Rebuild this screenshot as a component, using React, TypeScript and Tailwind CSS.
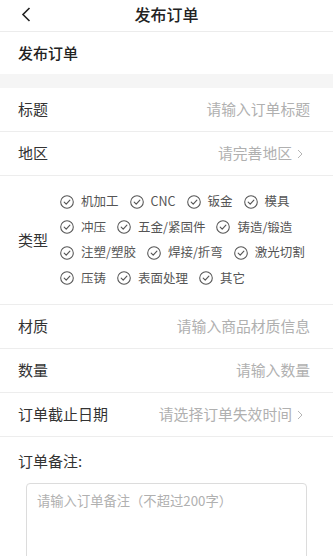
import React from 'react';

const types = [
  ['机加工', 'CNC', '钣金', '模具'],
  ['冲压', '五金/紧固件', '铸造/锻造'],
  ['注塑/塑胶', '焊接/折弯', '激光切割'],
  ['压铸', '表面处理', '其它'],
];

const CheckCircle: React.FC = () => (
  <svg width="14" height="14" viewBox="0 0 16 16" fill="none" className="shrink-0">
    <circle cx="8" cy="8" r="7.2" stroke="#555" strokeWidth="1.2" />
    <path d="M4.8 8.2 L7.1 10.4 L11.3 5.9" stroke="#555" strokeWidth="1.3" strokeLinecap="round" strokeLinejoin="round" />
  </svg>
);

const Chevron: React.FC = () => (
  <svg width="6" height="10" viewBox="0 0 6 10" fill="none" className="ml-[5px]">
    <path d="M1 1 L5 5 L1 9" stroke="#b5b5b5" strokeWidth="1" />
  </svg>
);

const Row: React.FC<{ label: string; placeholder: string; arrow?: boolean }> = ({ label, placeholder, arrow }) => (
  <div className={`flex h-[44px] items-center justify-between border-b border-[#ededed] pl-[18px] ${arrow ? 'pr-[30px]' : 'pr-[23px]'}`}>
    <span className="text-[15px] text-[#333]">{label}</span>
    <span className="flex items-center text-[14.8px] text-[#b0b0b0]">
      {placeholder}
      {arrow && <Chevron />}
    </span>
  </div>
);

export default function App() {
  return (
    <div className="min-h-[556px] w-[333px] bg-white" style={{ fontFamily: '"Noto Sans CJK SC", "Noto Sans", sans-serif' }}>
      {/* Header */}
      <div className="relative flex h-[32px] items-center justify-center border-b border-[#ececec]">
        <svg width="10" height="15" viewBox="0 0 10 15" fill="none" className="absolute left-[21px] top-[7px]">
          <path d="M8.5 1 L2 7.5 L8.5 14" stroke="#222" strokeWidth="1.6" />
        </svg>
        <span className="-mt-[3px] text-[16px] font-medium text-[#222]">发布订单</span>
      </div>

      <div className="flex h-[42px] items-center pl-[18px] text-[15px] font-medium text-[#222]">发布订单</div>
      <div className="h-[14px] bg-[#f5f5f5]" />

      <Row label="标题" placeholder="请输入订单标题" />
      <Row label="地区" placeholder="请完善地区" arrow />

      {/* Type */}
      <div className="flex items-center border-b border-[#ededed] py-[13px] pl-[18px]">
        <span className="w-[42px] text-[15px] text-[#333]">类型</span>
        <div className="flex flex-col">
          {types.map((row, i) => (
            <div key={i} className="flex h-[25.5px] items-center gap-[11px]">
              {row.map((t) => (
                <span key={t} className="flex items-center gap-[7px] text-[12.5px] text-[#555]">
                  <CheckCircle />
                  {t}
                </span>
              ))}
            </div>
          ))}
        </div>
      </div>

      <Row label="材质" placeholder="请输入商品材质信息" />
      <Row label="数量" placeholder="请输入数量" />
      <Row label="订单截止日期" placeholder="请选择订单失效时间" arrow />

      <div className="pl-[18px] pt-[13px] text-[15px] text-[#333]">订单备注:</div>
      <div className="mt-[10px] px-[26px]">
        <div className="h-[90px] rounded-[4px] border border-[#dcdcdc] px-[10px] py-[7px] text-[13.3px] text-[#b0b0b0]">
          请输入订单备注（不超过200字）
        </div>
      </div>
    </div>
  );
}
